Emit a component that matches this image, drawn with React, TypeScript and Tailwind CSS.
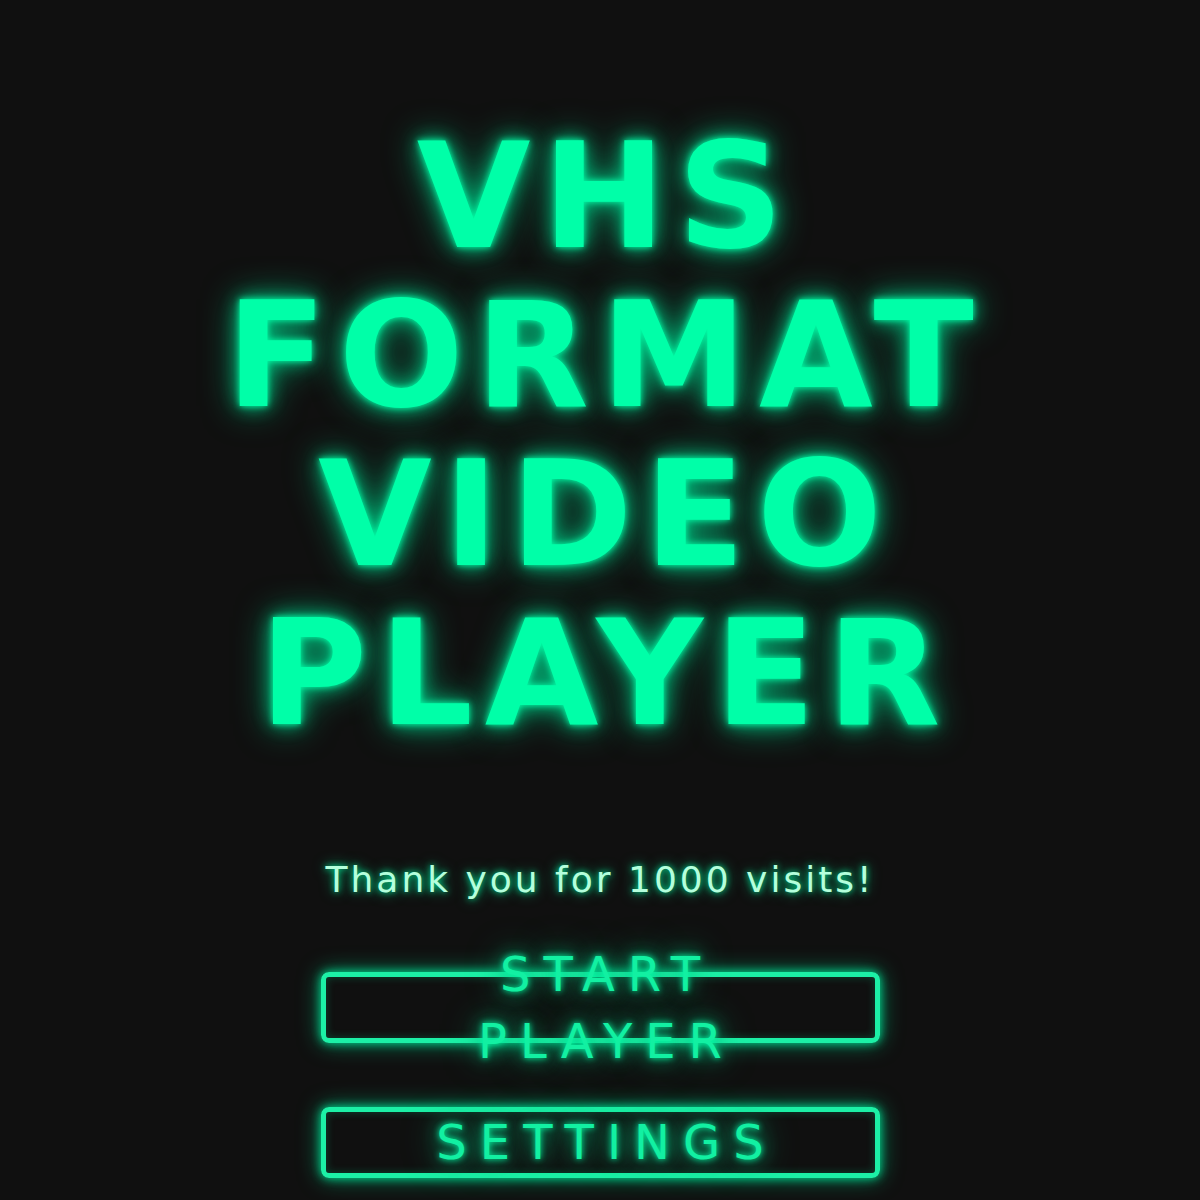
import React from 'react';

const glow = '[text-shadow:0_0_6px_#00ffa8,0_0_18px_#00c884,0_0_36px_#00a06a]';

function MenuButton({ lines }: { lines: string[] }) {
  return (
    <button className="flex h-[71px] w-[559px] items-center justify-center rounded-[8px] border-[5px] border-[#1cf0a6] bg-transparent shadow-[0_0_10px_#00d890,0_0_22px_#008f5e,inset_0_0_8px_#00b97a55]">
      <span className={`flex flex-col items-center text-[48px] leading-[67px] tracking-[13px] text-[#12f0a2] pl-[13px] ${glow}`}>
        {lines.map((l) => (
          <span key={l}>{l}</span>
        ))}
      </span>
    </button>
  );
}

export default function App() {
  return (
    <div
      className="flex min-h-[1200px] w-full flex-col items-center overflow-hidden bg-[#101010]"
      style={{ fontFamily: '"DejaVu Sans", Verdana, sans-serif' }}
    >
      <h1
        className={`mt-[117px] flex flex-col items-center text-[147px] font-bold leading-[159px] tracking-[12px] pl-[12px] text-[#00ffa8] ${glow}`}
      >
        <span>VHS</span>
        <span>FORMAT</span>
        <span>VIDEO</span>
        <span>PLAYER</span>
      </h1>

      <p className="mt-[103px] text-[36px] leading-[48px] tracking-[3px] text-[#b4ffdc] [text-shadow:0_0_6px_#00e897,0_0_14px_#00a86c]">
        Thank you for 1000 visits!
      </p>

      <div className="mt-[68px] flex flex-col items-center gap-[64px]">
        <MenuButton lines={['START', 'PLAYER']} />
        <MenuButton lines={['SETTINGS']} />
      </div>
    </div>
  );
}
